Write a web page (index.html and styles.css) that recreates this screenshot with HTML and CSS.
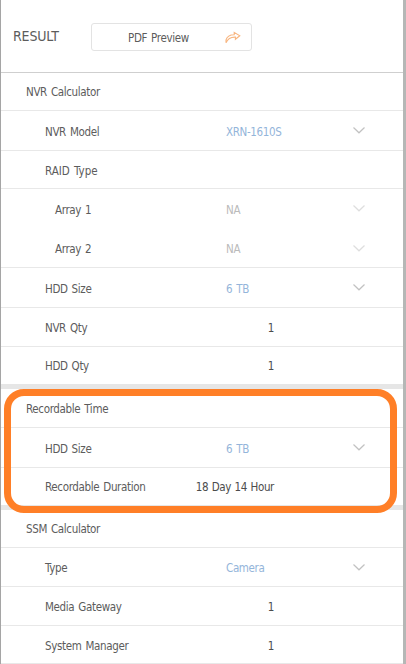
FILE: index.html
```html
<!DOCTYPE html>
<html lang="en">
<head>
  <meta charset="UTF-8" />
  <title>Result</title>
  <meta name="viewport" content="width=device-width, initial-scale=1.0" />
  <link rel="stylesheet" href="styles.css">
</head>
<body>
  <div class="panel">
    <header class="header">
      <h1>RESULT</h1>
      <button class="pdf-btn">
        <span>PDF Preview</span>
        <svg class="share" viewBox="0 0 16 13"><path d="M1 11.8V9C1.8 6 5 3.8 9.2 3.8V1.4L14.8 4.7L10.4 8.3V6.1C6.6 5.9 2.8 7.6 1 11.8Z"/></svg>
      </button>
    </header>

    <section>
      <h2 class="row">NVR Calculator</h2>
      <div class="row item tall">
        <span class="label">NVR Model</span>
        <span class="select">XRN-1610S</span>
        <svg class="arrow" viewBox="0 0 12 7"><path d="M.5 .5L6 5.8L11.5 .5"/></svg>
      </div>
      <div class="row item"><span class="label wide">RAID Type</span></div>
      <div class="row item sub tall disabled">
        <span class="label">Array 1</span>
        <span class="select">NA</span>
        <svg class="arrow" viewBox="0 0 12 7"><path d="M.5 .5L6 5.8L11.5 .5"/></svg>
      </div>
      <div class="row item sub mid disabled line">
        <span class="label">Array 2</span>
        <span class="select">NA</span>
        <svg class="arrow" viewBox="0 0 12 7"><path d="M.5 .5L6 5.8L11.5 .5"/></svg>
      </div>
      <div class="row item tall">
        <span class="label">HDD Size</span>
        <span class="select">6 TB</span>
        <svg class="arrow" viewBox="0 0 12 7"><path d="M.5 .5L6 5.8L11.5 .5"/></svg>
      </div>
      <div class="row item mid"><span class="label">NVR Qty</span><span class="value">1</span></div>
      <div class="row item last"><span class="label">HDD Qty</span><span class="value">1</span></div>
    </section>

    <section class="recordable">
      <h2 class="row mid">Recordable Time</h2>
      <div class="row item tall">
        <span class="label">HDD Size</span>
        <span class="select">6 TB</span>
        <svg class="arrow" viewBox="0 0 12 7"><path d="M.5 .5L6 5.8L11.5 .5"/></svg>
      </div>
      <div class="row item last"><span class="label">Recordable Duration</span><span class="value">18 Day 14 Hour</span></div>
      <div class="highlight"></div>
    </section>

    <section>
      <h2 class="row">SSM Calculator</h2>
      <div class="row item mid">
        <span class="label">Type</span>
        <span class="select">Camera</span>
        <svg class="arrow" viewBox="0 0 12 7"><path d="M.5 .5L6 5.8L11.5 .5"/></svg>
      </div>
      <div class="row item mid"><span class="label">Media Gateway</span><span class="value">1</span></div>
      <div class="row item"><span class="label">System Manager</span><span class="value">1</span></div>
    </section>
  </div>
</body>
</html>
```
FILE: styles.css
```css
* {
  box-sizing: border-box;
}
body {
  margin: 0;
  background: #fff;
  color: #5c5c5c;
  font-family: "DejaVu Sans Condensed", "DejaVu Sans", sans-serif;
  font-stretch: condensed;
  font-size: 11.5px;
  letter-spacing: -0.35px;
  word-spacing: 1px;
}
.panel {
  height: 664px;
  overflow: hidden;
  border-left: 1px solid #a5a5a5;
  border-right: 3px solid #b5b7b6;
}
.header {
  display: flex;
  align-items: center;
  height: 73px;
  padding-left: 12px;
  border-bottom: 1px solid #cfcfcf;
}
h1 {
  width: 78px;
  margin: 0;
  font-size: 14px;
  font-weight: normal;
  letter-spacing: -0.15px;
}
.pdf-btn {
  display: flex;
  align-items: center;
  justify-content: space-between;
  width: 161px;
  height: 28px;
  margin-top: 1px;
  padding: 2px 10px 0 36px;
  border: 1px solid #e3e3e3;
  border-radius: 3px;
  background: #fff;
  color: #5c5c5c;
  font: inherit;
  letter-spacing: inherit;
  word-spacing: inherit;
}
.share {
  width: 16px;
  height: 13px;
  fill: none;
  stroke: #f8b57f;
  stroke-width: 1.1;
}
.row {
  display: flex;
  align-items: center;
  height: 38px;
  margin: 0;
  padding: 0 38px 0 25px;
  border-bottom: 1px solid #e8e8e8;
  font-size: inherit;
  font-weight: normal;
}
.item {
  padding-top: 2px;
  padding-left: 44px;
}
.sub {
  padding-left: 54px;
  border-bottom-color: transparent;
}
.line {
  border-bottom-color: #e8e8e8;
}
.tall {
  height: 40px;
}
.mid {
  height: 39px;
}
.last {
  height: 42px;
  padding-top: 1px;
  border-bottom: 5px solid #e6e6e6;
}
.label {
  width: 181px;
  white-space: nowrap;
}
.wide {
  letter-spacing: 0;
}
.sub .label {
  width: 171px;
}
.select {
  flex: 1;
  color: #94b5da;
}
.disabled .select {
  color: #bbb;
}
.arrow {
  width: 12px;
  height: 7px;
  margin-bottom: 2px;
  fill: none;
  stroke: #c2c2c2;
  stroke-width: 1.2;
}
.disabled .arrow {
  stroke: #dedede;
}
.value {
  margin-left: -52px;
  width: 100px;
  color: #4c4c4c;
  word-spacing: 0.5px;
  text-align: right;
}
.recordable {
  position: relative;
}
.recordable h2 {
  padding-top: 1px;
}
.highlight {
  position: absolute;
  top: 0;
  left: 3px;
  right: 6px;
  height: 124px;
  border: 7.5px solid #ff7f27;
  border-radius: 20px;
}
```
